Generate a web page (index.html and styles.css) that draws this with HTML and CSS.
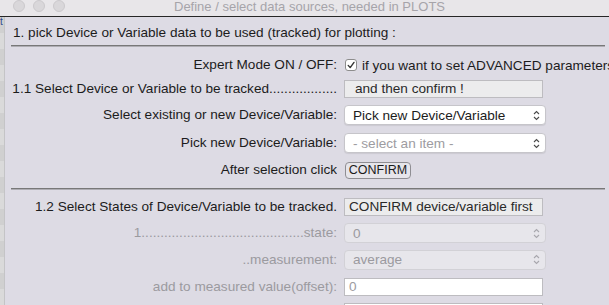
FILE: index.html
```html
<!DOCTYPE html>
<html lang="en">
<head>
    <meta charset="UTF-8">
    <meta name="viewport" content="width=device-width, initial-scale=1.0">
    <title>Define / select data sources</title>
    <link rel="stylesheet" href="styles.css">
</head>
<body>

    <div class="titlebar">
        <div class="lights"><span></span><span></span><span></span></div>
        <div class="title">Define / select data sources, needed in PLOTS</div>
        <div></div>
    </div>

    <div class="main">
        <div class="strip">t</div>

        <div class="panel">
            <h2>1. pick Device or Variable data to be used (tracked) for plotting :</h2>
            <div class="sep"></div>

            <!-- section 1.1 -->
            <div class="rows rows-1">
                <div class="lbl">Expert Mode ON / OFF:</div>
                <div class="ctl">
                    <span class="check">
                        <svg width="10" height="10" viewBox="0 0 10 10"><path d="M2.2 5.4 L4.2 7.6 L8 2.4" fill="none" stroke="#333" stroke-width="1.4" stroke-linecap="round" stroke-linejoin="round"/></svg>
                    </span>
                    <span>if you want to set ADVANCED parameters</span>
                </div>

                <div class="lbl">1.1 Select Device or Variable to be tracked..................</div>
                <div class="ctl"><div class="field">and then confirm !</div></div>

                <div class="lbl">Select existing or new Device/Variable:</div>
                <div class="ctl">
                    <div class="select">
                        <span>Pick new Device/Variable</span>
                        <svg class="arrows" width="7" height="11" viewBox="0 0 7 11"><path d="M1 4 L3.5 1.5 L6 4 M1 7 L3.5 9.5 L6 7" fill="none" stroke="#4a4a4a" stroke-width="1.1"/></svg>
                    </div>
                </div>

                <div class="lbl">Pick new Device/Variable:</div>
                <div class="ctl">
                    <div class="select">
                        <span class="placeholder">- select an item -</span>
                        <svg class="arrows" width="7" height="11" viewBox="0 0 7 11"><path d="M1 4 L3.5 1.5 L6 4 M1 7 L3.5 9.5 L6 7" fill="none" stroke="#4a4a4a" stroke-width="1.1"/></svg>
                    </div>
                </div>

                <div class="lbl">After selection click</div>
                <div class="ctl"><button class="btn">CONFIRM</button></div>
            </div>

            <div class="sep"></div>

            <!-- section 1.2 -->
            <div class="rows rows-2">
                <div class="lbl">1.2 Select States of Device/Variable to be tracked.</div>
                <div class="ctl"><div class="field tight">CONFIRM device/variable first</div></div>

                <div class="lbl off">1...........................................state:</div>
                <div class="ctl">
                    <div class="select disabled">
                        <span>0</span>
                        <svg class="arrows" width="7" height="11" viewBox="0 0 7 11"><path d="M1 4 L3.5 1.5 L6 4 M1 7 L3.5 9.5 L6 7" fill="none" stroke="#a8a7ad" stroke-width="1.1"/></svg>
                    </div>
                </div>

                <div class="lbl off">..measurement:</div>
                <div class="ctl">
                    <div class="select disabled">
                        <span>average</span>
                        <svg class="arrows" width="7" height="11" viewBox="0 0 7 11"><path d="M1 4 L3.5 1.5 L6 4 M1 7 L3.5 9.5 L6 7" fill="none" stroke="#a8a7ad" stroke-width="1.1"/></svg>
                    </div>
                </div>

                <div class="lbl off">add to measured value(offset):</div>
                <div class="ctl"><div class="input"><span class="placeholder">0</span></div></div>

                <div class="lbl off"></div>
                <div class="ctl"><div class="input"></div></div>
            </div>
        </div>
    </div>

</body>
</html>
```

FILE: styles.css
```css
body {
    font-family: "Liberation Sans", Arial, Helvetica, sans-serif;
    font-size: 13.6px;
    color: #1c1c1c;
    margin: 0;
    padding: 0;
    width: 609px;
    height: 305px;
    overflow: hidden;
    background: #dddbe4;
}

/* Title bar */
.titlebar {
    height: 16px;
    background: #e8e6e9;
    border-bottom: 1px solid #262626;
    display: grid;
    grid-template-columns: 1fr auto 1fr;
    align-items: center;
}
.lights {
    display: flex;
    gap: 8px;
    padding-left: 13px;
    margin-top: -4px;
}
.lights span {
    width: 12px;
    height: 12px;
    box-sizing: border-box;
    border-radius: 50%;
    background: #d9d7da;
    border: 1px solid #cbc9cc;
}
.title {
    color: #a6a4a9;
    font-size: 13px;
    line-height: 14px;
    margin: -2px 0 0 10px;
}

/* Body of the window */
.main {
    display: flex;
    height: 288px;
}
.strip {
    width: 4px;
    border-right: 1px solid #c4c4c6;
    background: repeating-linear-gradient(#d0d0d0 0, #d0d0d0 16px, #dadada 16px, #dadada 32px);
    color: #2b4a8c;
    font-size: 10px;
    line-height: 9px;
    overflow: hidden;
}
.panel {
    flex: 1;
    padding-left: 6px;
    min-width: 0;
}
h2 {
    margin: 0;
    padding: 8px 0 4px 2px;
    font-size: 13.6px;
    font-weight: normal;
    line-height: 16px;
    white-space: nowrap;
}
.sep {
    height: 0;
    border-top: 1px solid #787878;
    border-bottom: 1px solid #aeadb3;
    margin-right: 4px;
}

/* Label / control rows */
.rows {
    display: grid;
    grid-template-columns: 326px 1fr;
    column-gap: 7px;
}
.rows-1 {
    grid-template-rows: 24px 24px 28px 28px 26px;
    padding: 6px 0 5px;
}
.rows-2 {
    grid-template-rows: 26px 26px 27px 27px 24px;
    padding-top: 4px;
}
.lbl {
    text-align: right;
    white-space: nowrap;
    overflow: hidden;
    align-self: center;
    line-height: 16px;
}
.lbl.off {
    color: #9b9a9f;
}
.ctl {
    display: flex;
    align-items: center;
    white-space: nowrap;
}

.check {
    width: 12px;
    height: 12px;
    box-sizing: border-box;
    border: 1px solid #8d8d8d;
    border-radius: 3px;
    background: white;
    display: flex;
    align-items: center;
    justify-content: center;
    margin: 0 5px 0 1px;
}

.field {
    width: 199px;
    height: 18px;
    box-sizing: border-box;
    border: 1px solid #bdbcc0;
    background: #ececed;
    padding-left: 10px;
    line-height: 16px;
    color: #2a2a2a;
}
.field.tight {
    padding-left: 4px;
}

.select {
    width: 202px;
    height: 20px;
    box-sizing: border-box;
    background: white;
    border: 1px solid #c6c5ca;
    border-radius: 4px;
    box-shadow: 0 1px 1px rgba(0, 0, 0, 0.08);
    padding: 0 5px 0 8px;
    display: flex;
    align-items: center;
    justify-content: space-between;
}
.select.disabled {
    background: #e7e6eb;
    border-color: #d2d1d6;
    box-shadow: none;
    color: #9b9a9f;
}
.placeholder {
    color: #9d9ca1;
}

.btn {
    width: 66px;
    height: 17px;
    margin-left: 1px;
    padding: 0;
    font-family: inherit;
    font-size: 12.5px;
    color: #1c1c1c;
    background: #e6e5ea;
    border: 1px solid #8f8e93;
    border-radius: 4px;
}

.input {
    width: 199px;
    height: 18px;
    box-sizing: border-box;
    border: 1px solid #bdbcc0;
    background: white;
    padding-left: 4px;
    line-height: 16px;
}
```
